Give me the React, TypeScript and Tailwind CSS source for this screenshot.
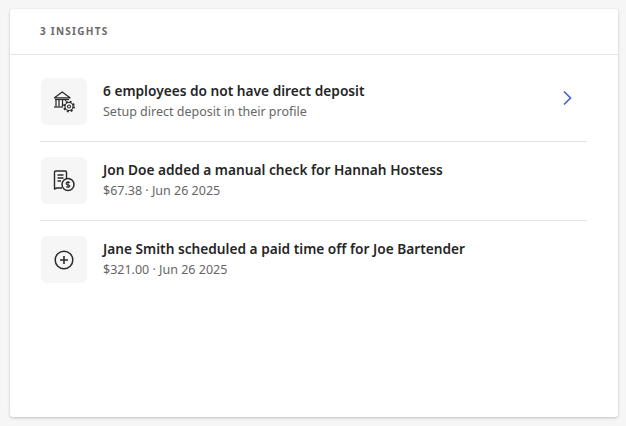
import React from 'react';

const BankIcon = () => (
  <svg width="22" height="22" viewBox="0 0 22 22" fill="none" stroke="#2b2b2b" strokeWidth="1.25">
    <path d="M1.500 6.800 9.200 1 17 6.800Z" strokeLinejoin="round" />
    <path d="M2 8.500H16" />
    <path d="M3 8.500v7M6 8.500v7M9.500 8.500v7M12.500 8.500v1.500" />
    <path d="M1 16H10" />
    <circle cx="16" cy="15.500" r="5.600" fill="#f6f6f6" stroke="none" />
    <circle cx="16" cy="15.500" r="4" strokeWidth="1.100" />
    <circle cx="16" cy="15.500" r="5" strokeWidth="1.800" strokeDasharray="2 1.930" />
    <circle cx="16" cy="15.500" r="1.500" strokeWidth="1.100" />
  </svg>
);

const CheckIcon = () => (
  <svg width="22" height="22" viewBox="0 0 22 22" fill="none" stroke="#2b2b2b" strokeWidth="1.400">
    <path d="M9 18H3.500L1.500 19V2.200C1.500 1.500 2 1 2.700 1H12.300C13 1 13.500 1.500 13.500 2.200V8" strokeLinejoin="round" />
    <path d="M4.500 5H10.500M4.500 8H10.500M4.500 11H8" />
    <circle cx="15" cy="14.500" r="6" strokeWidth="1.500" />
    <path d="M16.900 12.700c-.4-.7-3.800-1-3.800.8 0 1.800 3.800.9 3.800 2.500 0 1.500-3.200 1.300-3.800.5M15 11v7" strokeWidth="1.100" />
  </svg>
);

const PlusCircleIcon = () => (
  <svg width="20" height="20" viewBox="0 0 20 20" fill="none" stroke="#2b2b2b" strokeWidth="1.500">
    <circle cx="10" cy="10" r="8.800" />
    <path d="M10 6v8M6 10h8" strokeWidth="1.600" />
  </svg>
);

const rows = [
  { icon: <BankIcon />, title: '6 employees do not have direct deposit', sub: 'Setup direct deposit in their profile', chevron: true },
  { icon: <CheckIcon />, title: 'Jon Doe added a manual check for Hannah Hostess', sub: '$67.38 · Jun 26 2025', chevron: false },
  { icon: <PlusCircleIcon />, title: 'Jane Smith scheduled a paid time off for Joe Bartender', sub: '$321.00 · Jun 26 2025', chevron: false },
];

export default function App() {
  return (
    <div className="w-[626px] h-[426px] bg-[#f6f6f6] pt-[9px] pl-[10px] font-['Noto_Sans',sans-serif]">
      <div className="w-[608px] h-[408px] bg-white rounded-[3px] shadow-[0_1px_3px_rgba(0,0,0,0.22)]">
        <div className="h-[46px] border-b border-[#e3e3e3] pl-[30px] flex items-center">
          <span className="text-[10px] font-bold tracking-[0.125em] text-[#6b6b6b] uppercase">3 Insights</span>
        </div>
        <div className="mx-[30px] mt-[8px] w-[547px]">
          {rows.map((row, i) => (
            <div key={i} className={`flex items-center pt-[15px] pb-[16px] ${i < rows.length - 1 ? 'border-b border-[#e3e3e3]' : ''}`}>
              <div className="w-[46px] h-[47px] mr-[15px] ml-px rounded-[6px] bg-[#f6f6f6] flex items-center justify-center shrink-0">
                {row.icon}
              </div>
              <div className="flex-1 -mt-[2px] pl-px">
                <div className="text-[13.700px] leading-[21px] font-semibold text-[#262626]">{row.title}</div>
                <div className="text-[12.500px] leading-[21px] text-[#666666]">{row.sub}</div>
              </div>
              {row.chevron && (
                <svg width="12" height="16" viewBox="0 0 12 16" fill="none" stroke="#4a63c8" strokeWidth="1.700" className="mr-[14px] -mt-[7px]">
                  <path d="M3 1.500 9.500 8 3 14.500" />
                </svg>
              )}
            </div>
          ))}
        </div>
      </div>
    </div>
  );
}
